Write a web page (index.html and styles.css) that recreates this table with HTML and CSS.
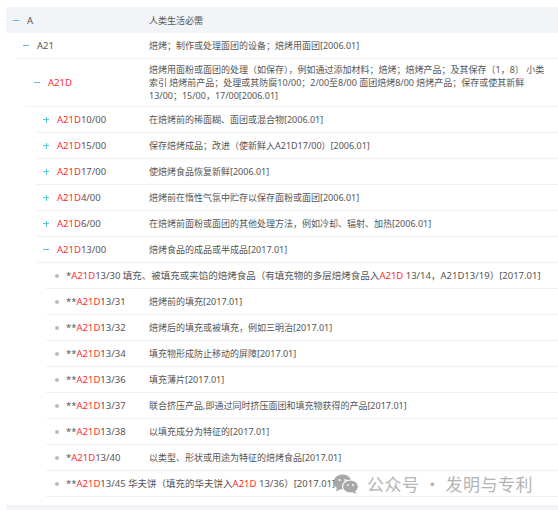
FILE: index.html
```html
<!DOCTYPE html>
<html lang="zh-CN">
<head>
<meta charset="utf-8">
<title>A21D</title>
<link rel="stylesheet" href="styles.css">
</head>
<body>
<div class="tree">
  <div class="row head lv1">
    <div class="code"><span class="ico minus"></span>A</div>
    <div class="desc">人类生活必需</div>
  </div>
  <div class="row lv2">
    <div class="code"><span class="ico minus"></span>A21</div>
    <div class="desc">焙烤；制作或处理面团的设备；焙烤用面团[2006.01]</div>
  </div>
  <div class="row lv3">
    <div class="code"><span class="ico minus"></span><span class="red">A21D</span></div>
    <div class="desc nowrap">焙烤用面粉或面团的处理（如保存），例如通过添加材料；焙烤；焙烤产品；及其保存〔1，8〕 小类<br>索引 焙烤前产品；处理或其防腐10/00；2/00至8/00 面团焙烤8/00 焙烤产品；保存或使其新鲜<br>13/00；15/00，17/00[2006.01]</div>
  </div>
  <div class="row lv4">
    <div class="code"><span class="ico plus"></span><span class="red">A21D</span>10/00</div>
    <div class="desc">在焙烤前的稀面糊、面团或混合物[2006.01]</div>
  </div>
  <div class="row lv4">
    <div class="code"><span class="ico plus"></span><span class="red">A21D</span>15/00</div>
    <div class="desc">保存焙烤成品；改进（使新鲜入A21D17/00）[2006.01]</div>
  </div>
  <div class="row lv4">
    <div class="code"><span class="ico plus"></span><span class="red">A21D</span>17/00</div>
    <div class="desc">使焙烤食品恢复新鲜[2006.01]</div>
  </div>
  <div class="row lv4">
    <div class="code"><span class="ico plus"></span><span class="red">A21D</span>4/00</div>
    <div class="desc">焙烤前在惰性气氛中贮存以保存面粉或面团[2006.01]</div>
  </div>
  <div class="row lv4">
    <div class="code"><span class="ico plus"></span><span class="red">A21D</span>6/00</div>
    <div class="desc">在焙烤前面粉或面团的其他处理方法，例如冷却、辐射、加热[2006.01]</div>
  </div>
  <div class="row lv4">
    <div class="code"><span class="ico minus"></span><span class="red">A21D</span>13/00</div>
    <div class="desc">焙烤食品的成品或半成品[2017.01]</div>
  </div>
  <div class="row lv5">
    <div class="full"><span class="dot"></span><span>*<span class="red">A21D</span>13/30 填充、被填充或夹馅的焙烤食品（有填充物的多层焙烤食品入<span class="red">A21D</span> 13/14，A21D13/19）[2017.01]</span></div>
  </div>
  <div class="row lv5">
    <div class="code"><span class="dot"></span>**<span class="red">A21D</span>13/31</div>
    <div class="desc">焙烤前的填充[2017.01]</div>
  </div>
  <div class="row lv5">
    <div class="code"><span class="dot"></span>**<span class="red">A21D</span>13/32</div>
    <div class="desc">焙烤后的填充或被填充，例如三明治[2017.01]</div>
  </div>
  <div class="row lv5">
    <div class="code"><span class="dot"></span>**<span class="red">A21D</span>13/34</div>
    <div class="desc">填充物形成防止移动的屏障[2017.01]</div>
  </div>
  <div class="row lv5">
    <div class="code"><span class="dot"></span>**<span class="red">A21D</span>13/36</div>
    <div class="desc">填充薄片[2017.01]</div>
  </div>
  <div class="row lv5">
    <div class="code"><span class="dot"></span>**<span class="red">A21D</span>13/37</div>
    <div class="desc">联合挤压产品,即通过同时挤压面团和填充物获得的产品[2017.01]</div>
  </div>
  <div class="row lv5">
    <div class="code"><span class="dot"></span>**<span class="red">A21D</span>13/38</div>
    <div class="desc">以填充成分为特征的[2017.01]</div>
  </div>
  <div class="row lv5">
    <div class="code"><span class="dot"></span>*<span class="red">A21D</span>13/40</div>
    <div class="desc">以类型、形状或用途为特征的焙烤食品[2017.01]</div>
  </div>
  <div class="row lv5">
    <div class="full"><span class="dot"></span><span>**<span class="red">A21D</span>13/45 华夫饼（填充的华夫饼入<span class="red">A21D</span> 13/36）[2017.01]</span></div>
  </div>
  <div class="next"></div>
</div>
<div class="watermark">
  <svg class="wx" width="26" height="20" viewBox="0 0 26 20">
    <ellipse cx="9.5" cy="8" rx="9" ry="7.5" fill="#9a9a9a"/>
    <path d="M4 13.5 L3 17.5 L8 15 Z" fill="#9a9a9a"/>
    <ellipse cx="17.5" cy="12.5" rx="8" ry="6.5" fill="#9a9a9a" stroke="#fff" stroke-width="1.2"/>
    <path d="M22 17 L23.5 19.8 L19 18.2 Z" fill="#9a9a9a"/>
    <circle cx="6.5" cy="6" r="1.1" fill="#fff"/>
    <circle cx="12.3" cy="6" r="1.1" fill="#fff"/>
    <circle cx="15" cy="11" r="0.9" fill="#fff"/>
    <circle cx="20" cy="11" r="0.9" fill="#fff"/>
  </svg>
  <span class="wtext">公众号 · 发明与专利</span>
</div>
</body>
</html>
```

FILE: styles.css
```css
html, body {
  margin: 0;
  padding: 0;
  background: #fff;
}
body {
  padding: 7px 0 0 6px;
  font-family: "Noto Sans", "Noto Sans CJK SC", sans-serif;
  font-size: 9px;
  color: #555;
  overflow: hidden;
  position: relative;
  height: 510px;
  box-sizing: border-box;
}
.tree {
  width: 552px;
}
.row {
  display: flex;
  align-items: center;
  min-height: 26px;
  box-sizing: border-box;
  padding: 4px 0;
  line-height: 13px;
  border-bottom: 1px solid #eef0f2;
}
.head {
  background: #f2f4f7;
  border-bottom: none;
}
.lv1 { margin-left: 0; }
.lv2 { margin-left: 10px; }
.lv3 { margin-left: 20px; }
.lv4 { margin-left: 30px; }
.lv5 { margin-left: 40px; }
.code {
  display: flex;
  align-items: center;
  flex: none;
  white-space: nowrap;
  font-size: 9.5px;
  box-sizing: border-box;
  padding-left: 7px;
}
.lv1 .code { width: 143px; }
.lv2 .code { width: 133px; }
.lv3 .code { width: 123px; padding-left: 8px; }
.lv4 .code { width: 113px; }
.lv5 .code { width: 103px; padding-left: 9px; }
.full {
  display: flex;
  align-items: center;
  padding-left: 9px;
  white-space: nowrap;
  font-size: 9.5px;
}
.desc {
  flex: 1;
  padding-right: 4px;
}
.nowrap {
  white-space: nowrap;
}
.ico {
  position: relative;
  display: inline-block;
  width: 6px;
  height: 6px;
  margin-right: 8px;
  flex: none;
}
.ico::before {
  content: "";
  position: absolute;
  left: 0;
  top: 2.5px;
  width: 6px;
  height: 1px;
  background: #55c8d8;
}
.plus::after {
  content: "";
  position: absolute;
  left: 2.5px;
  top: 0;
  width: 1px;
  height: 6px;
  background: #55c8d8;
}
.dot {
  display: inline-block;
  width: 4px;
  height: 4px;
  border-radius: 50%;
  background: #bcbcbc;
  margin-right: 7px;
  flex: none;
}
.red {
  color: #ff2d2d;
}
.next {
  margin-top: 8px;
  height: 10px;
  background: #f2f4f7;
}
.watermark {
  position: absolute;
  left: 333px;
  top: 471px;
  display: flex;
  align-items: center;
  gap: 8px;
  opacity: 0.85;
}
.wtext {
  font-family: "Noto Sans CJK SC", sans-serif;
  font-size: 17px;
  color: #a8a8a8;
  letter-spacing: 0.5px;
}
```
